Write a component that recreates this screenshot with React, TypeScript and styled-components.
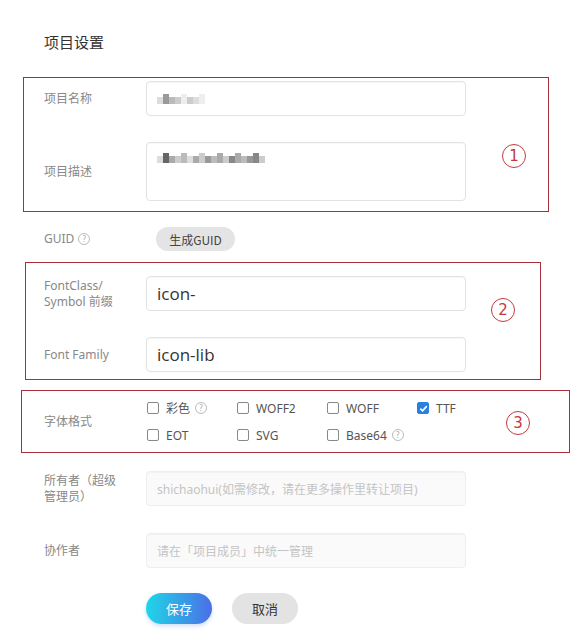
import styled, { createGlobalStyle } from 'styled-components'

const GlobalStyle = createGlobalStyle`
  body {
    margin: 0;
    background: #fff;
    font-family: "Noto Sans", "Noto Sans CJK SC", sans-serif;
    color: #333;
  }
`

const formats = [
  { name: '彩色', help: true },
  { name: 'WOFF2' },
  { name: 'WOFF' },
  { name: 'TTF', checked: true },
  { name: 'EOT' },
  { name: 'SVG' },
  { name: 'Base64', help: true },
]

const nameBlur = ['#ddd', '#999', '#bbb', '#ccc', '#eee', '#ccc', '#ddd', '#eee']
const descBlur = ['#ddd', '#666', '#aaa', '#ccc', '#bbb', '#ddd', '#aaa', '#ccc', '#999', '#bbb', '#aaa', '#ccc', '#888', '#aaa', '#bbb', '#999', '#888', '#ccc']

const Mosaic = ({ shades }: { shades: string[] }) => (
  <MosaicRow>
    {shades.map((c, i) => (
      <MosaicCell key={i} $shade={c} $tall={i % 3 === 1} />
    ))}
  </MosaicRow>
)

const Help = () => <HelpIcon>?</HelpIcon>

const App = () => {
  return (
    <Page>
      <GlobalStyle />
      <Title>项目设置</Title>

      <Marked $left={23} $width={526} $top={3} $bottom={10}>
        <Fields>
          <Row>
            <Label>项目名称</Label>
            <Input $h={35}>
              <Mosaic shades={nameBlur} />
            </Input>
          </Row>
          <Row>
            <Label>项目描述</Label>
            <Input $h={59} $top>
              <Mosaic shades={descBlur} />
            </Input>
          </Row>
        </Fields>
        <Circled $gap={36} $dy={63}>1</Circled>
      </Marked>

      <PlainRow $mt={15}>
        <Label>
          GUID <Help />
        </Label>
        <GreyPill>生成GUID</GreyPill>
      </PlainRow>

      <Marked $left={25} $width={516} $top={13} $bottom={7} $mt={11}>
        <Fields>
          <Row>
            <Label $lines>
              FontClass/
              <br />
              Symbol 前缀
            </Label>
            <Input $h={35}>
              <Value>icon-</Value>
            </Input>
          </Row>
          <Row>
            <Label>Font Family</Label>
            <Input $h={35}>
              <Value>icon-lib</Value>
            </Input>
          </Row>
        </Fields>
        <Circled $gap={25} $dy={22}>2</Circled>
      </Marked>

      <Marked $left={21} $width={549} $top={7} $bottom={7} $mt={10}>
        <Fields>
          <Row>
            <Label>字体格式</Label>
            <FormatGrid>
              {formats.map((f) => (
                <Check key={f.name}>
                  <Box $checked={!!f.checked}>
                    {f.checked && (
                      <svg width="9" height="9" viewBox="0 0 10 10">
                        <path d="M1.5 5.2 L4 7.6 L8.6 2.4" stroke="#fff" strokeWidth="1.8" fill="none" />
                      </svg>
                    )}
                  </Box>
                  {f.name}
                  {f.help && <Help />}
                </Check>
              ))}
            </FormatGrid>
          </Row>
        </Fields>
        <Circled $gap={39} $dy={13}>3</Circled>
      </Marked>

      <PlainRow $mt={18}>
        <Label $lines>
          所有者（超级
          <br />
          管理员）
        </Label>
        <Input $h={35} $disabled>
          <Placeholder>shichaohui(如需修改，请在更多操作里转让项目)</Placeholder>
        </Input>
      </PlainRow>

      <PlainRow $mt={27}>
        <Label>协作者</Label>
        <Input $h={35} $disabled>
          <Placeholder>请在「项目成员」中统一管理</Placeholder>
        </Input>
      </PlainRow>

      <Actions>
        <SaveButton>保存</SaveButton>
        <CancelButton>取消</CancelButton>
      </Actions>
    </Page>
  )
}

const Page = styled.div`
  width: 581px;
  height: 633px;
  padding-top: 32px;
  box-sizing: border-box;
  overflow: hidden;
`
const Title = styled.h1`
  margin: 0 0 25px 44px;
  font-size: 15px;
  line-height: 20px;
  font-weight: normal;
  color: #333;
`
const Marked = styled.section<{ $left: number; $width: number; $top: number; $bottom: number; $mt?: number }>`
  display: flex;
  align-items: flex-start;
  box-sizing: border-box;
  width: ${(p) => p.$width}px;
  margin: ${(p) => p.$mt || 0}px 0 0 ${(p) => p.$left}px;
  padding: ${(p) => p.$top}px 0 ${(p) => p.$bottom}px ${(p) => 44 - p.$left - 1}px;
  border: 1px solid #a5303b;
`
const Fields = styled.div`
  display: flex;
  flex-direction: column;
  gap: 26px;
`
const Row = styled.div`
  display: flex;
  align-items: center;
`
const PlainRow = styled(Row)<{ $mt: number }>`
  margin: ${(p) => p.$mt}px 0 0 44px;
`
const Label = styled.div<{ $lines?: boolean }>`
  width: 102px;
  flex-shrink: 0;
  display: flex;
  align-items: center;
  gap: 4px;
  font-size: 12px;
  line-height: 16px;
  color: #888;
  ${(p) => p.$lines && 'display: block;'}
`
const Input = styled.div<{ $h: number; $top?: boolean; $disabled?: boolean }>`
  width: 320px;
  height: ${(p) => p.$h}px;
  box-sizing: border-box;
  display: flex;
  align-items: ${(p) => (p.$top ? 'flex-start' : 'center')};
  padding: ${(p) => (p.$top ? '10px' : '0')} 10px 0;
  border: 1px solid ${(p) => (p.$disabled ? '#eee' : '#e2e2e2')};
  border-radius: 4px;
  background: ${(p) => (p.$disabled ? '#fafafa' : '#fff')};
  box-shadow: inset 0 1px 1px rgba(0, 0, 0, 0.03);
`
const Value = styled.span`
  font-family: "Open Sans", "Noto Sans", sans-serif;
  font-size: 17px;
  color: #333;
`
const Placeholder = styled.span`
  font-size: 12px;
  color: #c4c4c4;
  white-space: nowrap;
`
const MosaicRow = styled.div`
  display: flex;
  align-items: flex-end;
`
const MosaicCell = styled.span<{ $shade: string; $tall: boolean }>`
  width: 6px;
  height: ${(p) => (p.$tall ? 10 : 7)}px;
  background: ${(p) => p.$shade};
`
const HelpIcon = styled.span`
  display: inline-flex;
  align-items: center;
  justify-content: center;
  width: 10px;
  height: 10px;
  border: 1px solid #bbb;
  border-radius: 50%;
  font-size: 8px;
  line-height: 1;
  color: #aaa;
  vertical-align: middle;
`
const GreyPill = styled.button`
  margin-left: 10px;
  width: 79px;
  height: 24px;
  border: none;
  border-radius: 12px;
  background: #e4e4e4;
  font-family: "Noto Sans CJK SC", sans-serif;
  font-size: 12px;
  color: #444;
  padding: 0;
`
const FormatGrid = styled.div`
  display: grid;
  grid-template-columns: 90px 90px 90px 50px;
  row-gap: 7px;
  margin-left: 1px;
`
const Check = styled.label`
  display: flex;
  align-items: center;
  gap: 5px;
  height: 20px;
  font-size: 12px;
  color: #555;
  white-space: nowrap;
`
const Box = styled.span<{ $checked: boolean }>`
  width: 12px;
  height: 12px;
  box-sizing: border-box;
  display: inline-flex;
  align-items: center;
  justify-content: center;
  border: 1px solid ${(p) => (p.$checked ? '#2a7fe0' : '#888')};
  border-radius: 2px;
  background: ${(p) => (p.$checked ? '#2a7fe0' : '#fff')};
  margin-right: 2px;
`
const Circled = styled.span<{ $gap: number; $dy: number }>`
  flex-shrink: 0;
  width: 24px;
  height: 24px;
  box-sizing: border-box;
  margin: ${(p) => p.$dy}px 0 0 ${(p) => p.$gap}px;
  display: flex;
  align-items: center;
  justify-content: center;
  border: 1.5px solid #c33a3e;
  border-radius: 50%;
  font-family: "DejaVu Sans", sans-serif;
  font-size: 15px;
  color: #c33a3e;
`
const Actions = styled.div`
  display: flex;
  gap: 20px;
  margin: 25px 0 0 146px;
`
const PillButton = styled.button`
  width: 66px;
  height: 31px;
  border: none;
  border-radius: 16px;
  padding: 0;
  font-family: "Noto Sans CJK SC", sans-serif;
  font-size: 13px;
`
const SaveButton = styled(PillButton)`
  background: linear-gradient(90deg, #1fd6e8, #4b6fe6);
  color: #fff;
  box-shadow: 0 2px 4px rgba(60, 120, 230, 0.25);
`
const CancelButton = styled(PillButton)`
  background: #e3e3e3;
  color: #333;
`

export default App
